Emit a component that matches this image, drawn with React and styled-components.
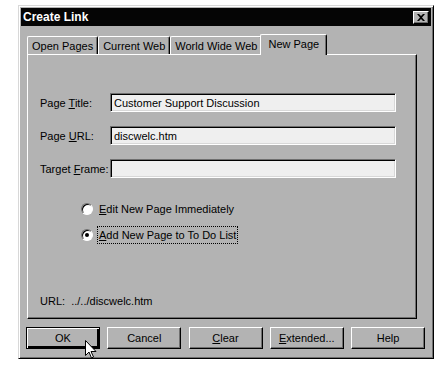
import React from 'react';
import styled, { createGlobalStyle } from 'styled-components';

const face = '#b3b3b3';
const shadow = '#6f6f6f';

const GlobalStyle = createGlobalStyle`
  html, body {
    margin: 0;
    background: #fff;
    font-family: "Liberation Sans", Arial, sans-serif;
    font-size: 11px;
    color: #000;
  }
`;

const Window = styled.div`
  position: relative;
  box-sizing: border-box;
  margin: 5px 0 0 18px;
  width: 416px;
  height: 354px;
  background: ${face};
  border-top: 1px solid #d8d8d8;
  border-left: 1px solid #d8d8d8;
  border-right: 1px solid #000;
  border-bottom: 1px solid #000;
  box-shadow: inset 1px 1px 0 #fff, inset -1px -1px 0 ${shadow};
  padding: 2px;
  display: flex;
  flex-direction: column;
`;

const TitleBar = styled.div`
  height: 18px;
  background: #050505;
  display: flex;
  align-items: center;
  justify-content: space-between;
  padding: 0 2px 0 2px;
  color: #fff;
  font-weight: bold;
  font-size: 12px;
`;

const CloseButton = styled.div`
  box-sizing: border-box;
  width: 16px;
  height: 13px;
  background: ${face};
  border-top: 1px solid #fff;
  border-left: 1px solid #fff;
  border-right: 1px solid #000;
  border-bottom: 1px solid #000;
  box-shadow: inset -1px -1px 0 ${shadow};
  display: flex;
  align-items: center;
  justify-content: center;
`;

const Body = styled.div`
  flex: 1;
  display: flex;
  flex-direction: column;
  padding: 7px 6px 0 5px;
`;

const TabRow = styled.div`
  display: flex;
  align-items: flex-end;
  height: 21px;
  padding-left: 1px;
  position: relative;
  z-index: 1;
`;

const Tab = styled.div`
  box-sizing: border-box;
  height: ${p => (p.$active ? '21px' : '18px')};
  padding: 0 ${p => (p.$active ? '7px' : '4px')};
  margin: ${p => (p.$active ? '0 -2px -1px -2px' : '0')};
  background: ${face};
  border-top: 1px solid #fff;
  border-left: 1px solid #fff;
  border-right: 1px solid #000;
  border-radius: 2px 2px 0 0;
  box-shadow: inset -1px 0 0 ${shadow};
  display: flex;
  align-items: center;
  white-space: nowrap;
  padding-bottom: ${p => (p.$active ? '2px' : '0')};
`;

const Panel = styled.div`
  box-sizing: border-box;
  width: 390px;
  height: 265px;
  margin-left: 1px;
  border-top: 1px solid #fff;
  border-left: 1px solid #fff;
  border-right: 1px solid #000;
  border-bottom: 1px solid #000;
  box-shadow: inset -1px -1px 0 ${shadow};
  display: flex;
  flex-direction: column;
  padding: 38px 20px 11px 12px;
`;

const FieldRow = styled.div`
  display: flex;
  align-items: center;
  height: 19px;
  margin-bottom: 14px;
`;

const Label = styled.div`
  width: 70px;
  white-space: nowrap;
`;

const TextBox = styled.div`
  box-sizing: border-box;
  width: 286px;
  height: 19px;
  background: #efefef;
  border-top: 1px solid ${shadow};
  border-left: 1px solid ${shadow};
  border-right: 1px solid #fff;
  border-bottom: 1px solid #fff;
  box-shadow: inset 1px 1px 0 #000, inset -1px -1px 0 #d8d8d8;
  padding: 0 3px;
  display: flex;
  align-items: center;
`;

const RadioGroup = styled.div`
  display: flex;
  flex-direction: column;
  gap: 6px;
  margin: 7px 0 0 41px;
`;

const RadioRow = styled.div`
  display: flex;
  align-items: center;
  height: 20px;
  gap: 5px;
`;

const Radio = styled.div`
  box-sizing: border-box;
  width: 12px;
  height: 12px;
  border-radius: 50%;
  background: #fff;
  border: 1px solid;
  border-color: ${shadow} #fff #fff ${shadow};
  box-shadow: inset 1px 1px 0 #000;
  display: flex;
  align-items: center;
  justify-content: center;
  &::after {
    content: '';
    width: 4px;
    height: 4px;
    border-radius: 50%;
    background: ${p => (p.$checked ? '#000' : 'transparent')};
  }
`;

const RadioLabel = styled.div`
  padding: 2px 1px;
  outline: ${p => (p.$focus ? '1px dotted #000' : 'none')};
  outline-offset: 0;
`;

const UrlLine = styled.div`
  margin-top: auto;
`;

const ButtonRow = styled.div`
  display: flex;
  justify-content: space-between;
  width: 399px;
  margin-top: 8px;
`;

const Button = styled.div`
  box-sizing: border-box;
  width: 74px;
  height: 22px;
  background: ${face};
  border: 1px solid;
  border-color: ${p => (p.$default ? '#000' : '#fff #000 #000 #fff')};
  box-shadow: ${p =>
    p.$default
      ? `inset 1px 1px 0 #fff, inset -2px -2px 0 #000`
      : `inset -1px -1px 0 ${shadow}`};
  display: flex;
  align-items: center;
  justify-content: center;
  padding-bottom: 1px;
`;

const Cursor = styled.svg`
  position: absolute;
  left: 66px;
  top: 334px;
`;

const Key = styled.span`
  text-decoration: underline;
`;

const App = () => (
  <>
    <GlobalStyle />
    <Window>
      <TitleBar>
        <span>Create Link</span>
        <CloseButton>
          <svg width="8" height="7" viewBox="0 0 8 7">
            <path d="M0 0h2l2 2 2-2h2L5 3.5 8 7H6L4 5 2 7H0l3-3.5z" fill="#000" />
          </svg>
        </CloseButton>
      </TitleBar>
      <Body>
        <TabRow>
          <Tab>Open Pages</Tab>
          <Tab>Current Web</Tab>
          <Tab>World Wide Web</Tab>
          <Tab $active>New Page</Tab>
        </TabRow>
        <Panel>
          <FieldRow>
            <Label>Page <Key>T</Key>itle:</Label>
            <TextBox>Customer Support Discussion</TextBox>
          </FieldRow>
          <FieldRow>
            <Label>Page <Key>U</Key>RL:</Label>
            <TextBox>discwelc.htm</TextBox>
          </FieldRow>
          <FieldRow>
            <Label>Target <Key>F</Key>rame:</Label>
            <TextBox />
          </FieldRow>
          <RadioGroup>
            <RadioRow>
              <Radio />
              <RadioLabel><Key>E</Key>dit New Page Immediately</RadioLabel>
            </RadioRow>
            <RadioRow>
              <Radio $checked />
              <RadioLabel $focus><Key>A</Key>dd New Page to To Do List</RadioLabel>
            </RadioRow>
          </RadioGroup>
          <UrlLine>URL:&nbsp; ../../discwelc.htm</UrlLine>
        </Panel>
        <ButtonRow>
          <Button $default>OK</Button>
          <Button>Cancel</Button>
          <Button><Key>C</Key>lear</Button>
          <Button><Key>E</Key>xtended...</Button>
          <Button>Help</Button>
        </ButtonRow>
      </Body>
      <Cursor width="12" height="19" viewBox="0 0 12 19">
        <path d="M0.5 0.5v15l3.5-3.5 2.5 6 2-1-2.5-5.5h5z" fill="#fff" stroke="#000" strokeWidth="1" />
      </Cursor>
    </Window>
  </>
);

export default App;
